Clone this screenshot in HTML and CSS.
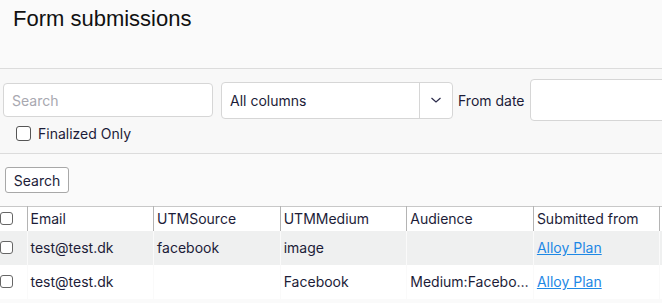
FILE: index.html
```html
<!DOCTYPE html>
<html>
<head>
<meta charset="utf-8">
<link rel="stylesheet" href="styles.css">
</head>
<body>
<div class="page">
  <header class="page-header">
    <h1 class="title">Form submissions</h1>
  </header>
  <section class="filters">
    <div class="filter-row">
      <input class="search-input" type="text" placeholder="Search">
      <div class="select">
        <span class="select-value">All columns</span>
        <span class="select-arrow">
          <svg width="12" height="8" viewBox="0 0 12 8"><path d="M1.5 2 L6 6 L10.5 2" fill="none" stroke="#2a2a4a" stroke-width="1.2"/></svg>
        </span>
      </div>
      <label class="date-label">From date</label>
      <div class="date-input"></div>
    </div>
    <label class="check-row">
      <span class="box"></span>
      <span>Finalized Only</span>
    </label>
  </section>
  <div class="actions">
    <button class="btn">Search</button>
  </div>
  <table class="grid">
    <colgroup>
      <col class="c-check">
      <col class="c-col">
      <col class="c-col">
      <col class="c-col">
      <col class="c-col">
      <col class="c-col">
      <col class="c-last">
    </colgroup>
    <thead>
      <tr>
        <th class="cell-check"><span class="box"></span></th>
        <th>Email</th>
        <th>UTMSource</th>
        <th>UTMMedium</th>
        <th>Audience</th>
        <th>Submitted from</th>
        <th></th>
      </tr>
    </thead>
    <tbody>
      <tr class="alt">
        <td class="cell-check"><span class="box"></span></td>
        <td>test@test.dk</td>
        <td>facebook</td>
        <td>image</td>
        <td></td>
        <td><a href="#" class="link">Alloy Plan</a></td>
        <td></td>
      </tr>
      <tr>
        <td class="cell-check"><span class="box"></span></td>
        <td>test@test.dk</td>
        <td></td>
        <td>Facebook</td>
        <td class="clip">Medium:Facebook ads</td>
        <td><a href="#" class="link">Alloy Plan</a></td>
        <td></td>
      </tr>
    </tbody>
  </table>
</div>
</body>
</html>
```
FILE: styles.css
```css
* { box-sizing: border-box; }
html, body { margin: 0; padding: 0; }
body {
  background: #fafafa;
  font-family: Inter, "Noto Sans", sans-serif;
  font-size: 14px;
  color: #1c1c38;
  overflow: hidden;
}
.page { width: 662px; }
.page-header {
  height: 69px;
  border-bottom: 1px solid #dcdcdc;
  padding: 6px 13px 0;
}
.title {
  margin: 0;
  font-family: "Liberation Sans", Arial, sans-serif;
  font-weight: 400;
  font-size: 22px;
  line-height: 26px;
  color: #111;
}
.filters {
  height: 85px;
  border-bottom: 1px solid #dcdcdc;
  background: #f8f8f8;
  padding-top: 10px;
}
.filter-row {
  display: flex;
  align-items: center;
  height: 42px;
  padding-left: 3px;
  white-space: nowrap;
}
.filter-row > * { flex: none; }
.search-input {
  width: 210px;
  height: 34px;
  border: 1px solid #d6d6d6;
  border-radius: 4px;
  background: #fff;
  padding: 0 8px;
  font: inherit;
  font-size: 14px;
  color: #1c1c38;
  outline: none;
}
.search-input::placeholder { color: #a8a8b0; }
.select {
  margin-left: 8px;
  width: 232px;
  height: 37px;
  border: 1px solid #d6d6d6;
  border-radius: 4px;
  background: #fff;
  display: flex;
  align-items: center;
}
.select-value { flex: 1; padding-left: 8px; }
.select-arrow {
  width: 33px;
  height: 100%;
  border-left: 1px solid #d6d6d6;
  display: flex;
  align-items: center;
  justify-content: center;
}
.select-arrow svg { display: block; }
.date-label { margin-left: 5px; }
.date-input {
  margin-left: 5px;
  width: 200px;
  height: 42px;
  border: 1px solid #d6d6d6;
  border-radius: 4px;
  background: #fff;
}
.check-row {
  display: flex;
  align-items: center;
  gap: 7px;
  margin-top: 5px;
  padding-left: 16px;
  height: 15px;
  line-height: 15px;
}
.box {
  display: inline-block;
  width: 15px;
  height: 15px;
  border: 1px solid #555;
  border-radius: 3px;
  background: #fff;
  flex: none;
}
.actions {
  height: 52px;
  padding: 13px 0 0 5px;
}
.btn {
  font: inherit;
  font-size: 14px;
  color: #1c1c38;
  height: 26px;
  width: 64px;
  padding: 0;
  background: #fff;
  border: 1px solid #a8a8a8;
  border-radius: 3px;
}
.grid {
  border-collapse: collapse;
  table-layout: fixed;
  width: 800px;
  border-top: 1px solid #c8c8c8;
}
.c-check { width: 27px; }
.c-col { width: 126.6px; }
.c-last { width: 140px; }
.grid th {
  background: #fff;
  font-weight: 400;
  text-align: left;
  height: 24px;
  padding: 0 0 0 3px;
  border-left: 1px solid #b4b4b4;
  white-space: nowrap;
  overflow: hidden;
}
.grid th.cell-check { border-left: none; padding: 0; }
.grid td {
  height: 34px;
  padding: 0 2px 0 3px;
  white-space: nowrap;
  overflow: hidden;
  text-overflow: ellipsis;
  border-left: 1px solid transparent;
}
.grid td.cell-check { padding: 0; border-left: none; }
.cell-check .box {
  width: 13px;
  height: 13px;
  display: block;
  border-color: #666;
}
.grid tr.alt td { background: #eff0f0; }
.grid tbody tr:not(.alt) td { background: #fff; }
.link { color: #1e88e5; text-decoration: underline; }
```
